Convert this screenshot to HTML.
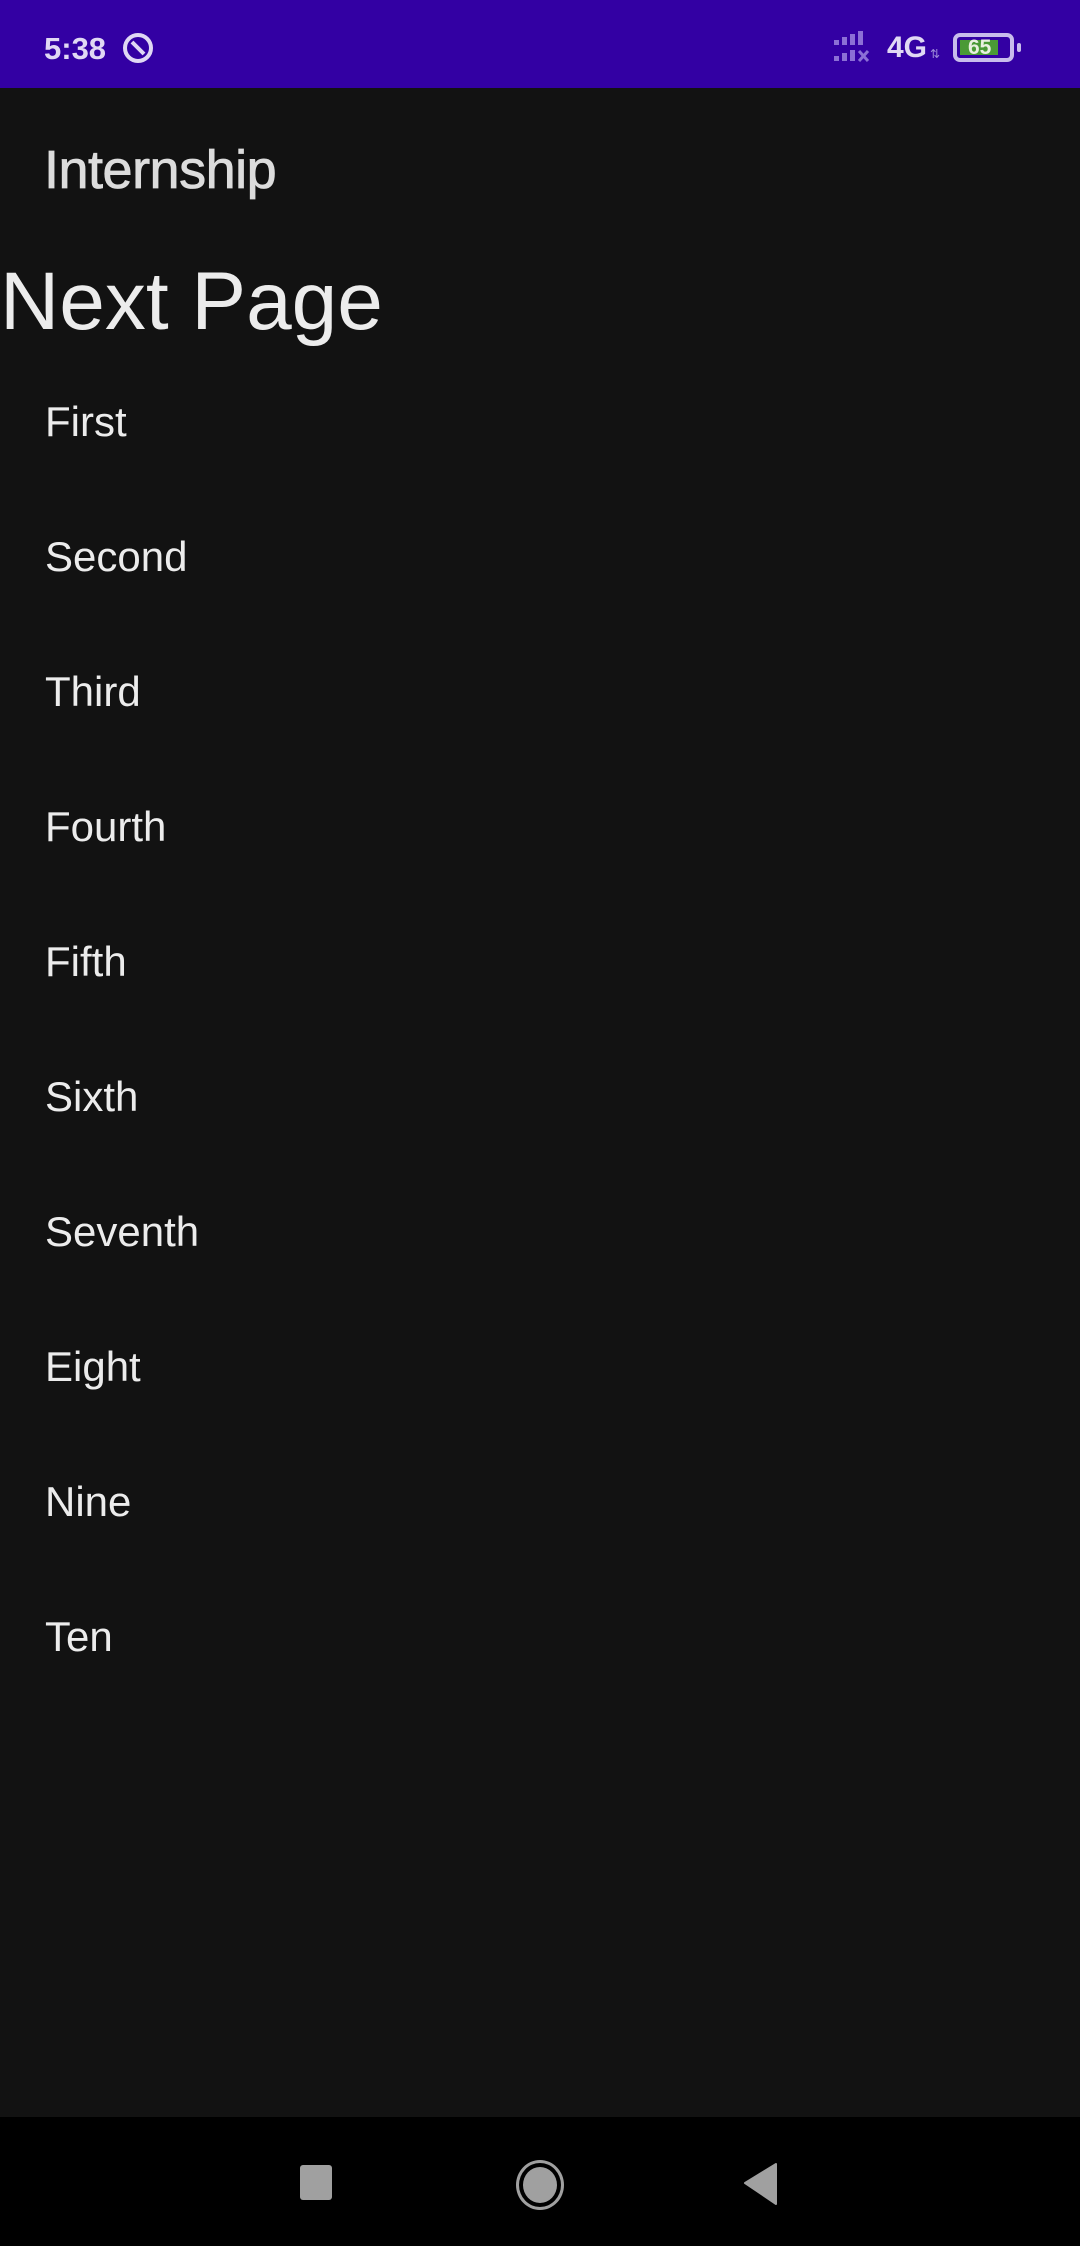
<!DOCTYPE html>
<html><head><meta charset="utf-8"><style>
*{margin:0;padding:0;box-sizing:border-box}
html,body{width:1080px;height:2246px;background:#121212;overflow:hidden;font-family:"Liberation Sans",Roboto,sans-serif}
.sb{position:absolute;left:0;top:0;width:1080px;height:88px;background:#3300a3;color:#e0d8f4}
.t{position:absolute;white-space:nowrap;line-height:1}
.nav{position:absolute;left:0;top:2117px;width:1080px;height:129px;background:#000}
</style></head><body>
<div class="sb">
<div class="t" style="left:44px;top:33px;font-size:31px;font-weight:bold;">5:38</div>
<svg style="position:absolute;left:120px;top:30px" width="36" height="36" viewBox="0 0 36 36"><circle cx="18" cy="18" r="13" fill="none" stroke="#e0d8f4" stroke-width="4"/><path d="M12 12 L24 24" stroke="#e0d8f4" stroke-width="4"/></svg>
<svg style="position:absolute;left:832px;top:30px" width="45" height="36" viewBox="0 0 45 36">
<g fill="#8c6fd6"><rect x="2" y="10" width="5" height="5"/><rect x="10" y="7" width="5" height="8"/><rect x="18" y="4" width="5" height="11"/><rect x="26" y="1" width="5" height="14"/><rect x="2" y="26" width="5" height="5"/><rect x="10" y="23" width="5" height="8"/><rect x="18" y="20" width="5" height="11"/></g>
<path d="M27 21 L36 31 M36 21 L27 31" stroke="#8c6fd6" stroke-width="3"/></svg>
<div class="t" style="left:887px;top:33px;font-size:30px;font-weight:bold;">4G</div>
<div class="t" style="left:930px;top:48px;font-size:12px;color:#9c88d8">⇅</div>
<div style="position:absolute;left:953px;top:33px;width:61px;height:29px;border:4px solid #c8bcec;border-radius:7px"></div>
<div style="position:absolute;left:960px;top:40px;width:38px;height:15px;background:#4a9a36"></div>
<div style="position:absolute;left:1017px;top:43px;width:4px;height:9px;background:#c8bcec;border-radius:2px"></div>
<div class="t" style="left:968px;top:37px;font-size:21px;font-weight:bold;color:#e8f0e0">65</div>
</div>
<div class="t" style="left:44px;top:143px;font-size:54px;color:#dcdcdc;letter-spacing:-0.5px;-webkit-text-stroke:0.8px #dcdcdc">Internship</div>
<div class="t" style="left:0;top:261px;font-size:82px;color:#ececec">Next Page</div>
<div style="position:absolute;left:45px;top:401px;font-size:42px;color:#ececec;line-height:135px;margin-top:-47px">
<div>First</div><div>Second</div><div>Third</div><div>Fourth</div><div>Fifth</div><div>Sixth</div><div>Seventh</div><div>Eight</div><div>Nine</div><div>Ten</div>
</div>
<div class="nav">
<div style="position:absolute;left:300px;top:48px;width:32px;height:35px;background:#a0a0a0;border-radius:3px"></div>
<div style="position:absolute;left:516px;top:43px;width:48px;height:50px;border:3px solid #a0a0a0;border-radius:50%"></div>
<div style="position:absolute;left:523px;top:50px;width:34px;height:36px;background:#a0a0a0;border-radius:50%"></div>
<svg style="position:absolute;left:743px;top:45px" width="36" height="44" viewBox="0 0 36 44"><path d="M33 2 L33 42 L2 21 Z" fill="#a0a0a0" stroke="#a0a0a0" stroke-width="2" stroke-linejoin="round"/></svg>
</div>
</body></html>
